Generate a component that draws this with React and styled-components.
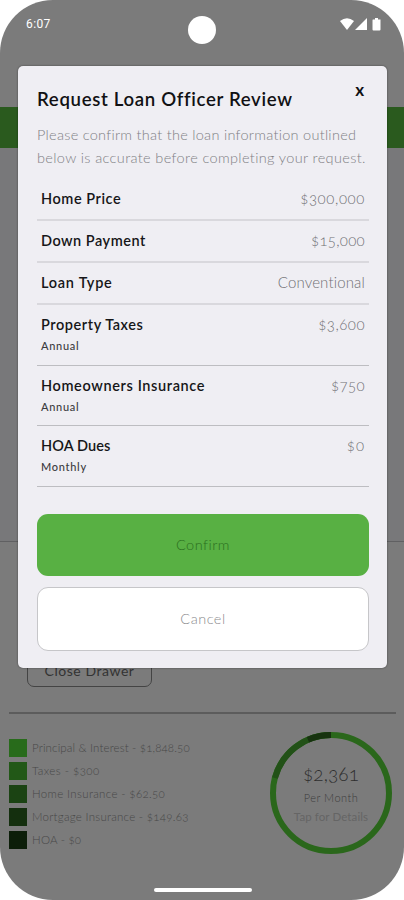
import React from "react";
import styled, { createGlobalStyle } from "styled-components";

const GlobalStyle = createGlobalStyle`
  * {
    box-sizing: border-box;
  }
  body {
    margin: 0;
    background: #ffffff;
    font-family: Lato, "Liberation Sans", sans-serif;
    font-variant-numeric: oldstyle-nums;
  }
`;

const Phone = styled.div`
  position: relative;
  width: 404px;
  height: 900px;
  overflow: hidden;
  border-radius: 53px;
  background: #7b7b7b;
  display: flex;
  flex-direction: column;
`;

const StatusBar = styled.div`
  height: 107px;
  padding: 15px 22px 0 26px;
  display: grid;
  grid-template-columns: 1fr 28px 1fr;
  align-items: start;
  color: #ffffff;
`;

const Clock = styled.span`
  margin-top: 2px;
  font-family: Roboto, sans-serif;
  font-size: 12px;
  line-height: 15px;
  font-weight: 400;
  letter-spacing: 0.4px;
  font-variant-numeric: normal;
`;

const Camera = styled.div`
  width: 28px;
  height: 28px;
  margin-left: -2px;
  margin-top: 1px;
  border-radius: 50%;
  background: #ffffff;
`;

const StatusIcons = styled.svg`
  justify-self: end;
  margin: 2px 0 0 0;
`;

const HeaderBand = styled.div`
  height: 41px;
  background: #2a5a1e;
`;

const LoanArea = styled.div`
  height: 394px;
  background: #78787a;
  border-bottom: 1px solid #606062;
`;

const DrawerButton = styled.div`
  width: 125px;
  height: 36px;
  margin: 109px 0 0 27px;
  border: 1px solid #444444;
  border-radius: 7px;
  color: #333333;
  font-size: 14px;
  line-height: 37px;
  text-align: center;
  letter-spacing: 0.55px;
`;

const Divider = styled.div`
  height: 2px;
  margin: 25px 8px 0 9px;
  background: #5c5c5c;
`;

const Breakdown = styled.div`
  display: flex;
  justify-content: space-between;
  padding: 17px 12px 0 9px;
`;

const Legend = styled.div`
  padding-top: 8px;
  display: flex;
  flex-direction: column;
  gap: 5px;
`;

const LegendItem = styled.div`
  display: flex;
  align-items: center;
  height: 18px;
  gap: 5px;
  color: #484848;
  font-size: 11.5px;
  line-height: 16px;
  font-weight: 300;
  letter-spacing: ${(props) => props.$spacing || 0}px;
  white-space: nowrap;
`;

const Swatch = styled.span`
  width: 18px;
  height: 18px;
  background: ${(props) => props.$color};
`;

const Payment = styled.div`
  display: grid;
  width: 122px;
  height: 124px;

  & > * {
    grid-area: 1 / 1;
  }
`;

const PaymentText = styled.div`
  display: flex;
  flex-direction: column;
  align-items: center;
  padding-top: 31px;
`;

const Total = styled.span`
  color: #2e2e2e;
  font-size: 19px;
  line-height: 24px;
  font-weight: 300;
  letter-spacing: 0.1px;
`;

const PerMonth = styled.span`
  margin-top: 3px;
  color: #3c3c3c;
  font-size: 11px;
  line-height: 18px;
  font-weight: 300;
  letter-spacing: 0.5px;
`;

const TapHint = styled.span`
  color: #656565;
  font-size: 11.5px;
  line-height: 19px;
  letter-spacing: 0.1px;
`;

const HomeBar = styled.div`
  position: absolute;
  left: 154px;
  bottom: 8px;
  width: 98px;
  height: 4px;
  border-radius: 2px;
  background: #ffffff;
`;

const Modal = styled.div`
  position: absolute;
  top: 66px;
  left: 18px;
  width: 369px;
  height: 602px;
  padding: 20px 18px 0 19px;
  border-radius: 5px;
  background: #efeef3;
  box-shadow: 0 0 2px rgba(0, 0, 0, 0.5);
`;

const ModalHeader = styled.div`
  display: flex;
  justify-content: space-between;
`;

const Title = styled.h1`
  margin: 0;
  color: #111113;
  font-size: 18.6px;
  line-height: 27px;
  height: 26px;
  font-weight: 600;
  letter-spacing: 0.67px;
  white-space: nowrap;
`;

const CloseButton = styled.span`
  margin-right: 5px;
  margin-top: -5px;
  height: 20px;
  color: #111113;
  font-size: 17px;
  line-height: 18px;
  font-weight: 700;
`;

const Message = styled.p`
  margin: 11px 0 0;
  color: #808084;
  font-size: 14.5px;
  line-height: 23px;
  font-weight: 300;
  white-space: nowrap;
`;

const MessageLine = styled.span`
  display: block;
  letter-spacing: ${(props) => props.$spacing}px;
`;

const Rows = styled.div`
  margin-top: 10px;
`;

const Row = styled.div`
  display: flex;
  justify-content: space-between;
  height: ${(props) => (props.$tall ? 60.7 : 42)}px;
  padding: 9px 4px 0;
  border-bottom: ${(props) => (props.$tall ? "1px solid #bdbdc1" : "2px solid #d9d8dd")};
`;

const Label = styled.div`
  color: #161618;
  font-size: 14.5px;
  line-height: 21px;
  font-weight: 600;
  letter-spacing: ${(props) => props.$spacing}px;
`;

const Period = styled.div`
  color: #3c3c3f;
  font-size: 11px;
  line-height: 21px;
  font-weight: 500;
  letter-spacing: 0.7px;
`;

const Value = styled.div`
  color: #707074;
  font-size: 15px;
  line-height: 21px;
  font-weight: 300;
  letter-spacing: ${(props) => props.$spacing}px;
`;

const Button = styled.button`
  display: block;
  width: 100%;
  height: ${(props) => (props.$primary ? 62 : 64)}px;
  margin: ${(props) => (props.$primary ? "27px 0 0" : "11px 0 0")};
  padding: 0 0 2px;
  border: ${(props) => (props.$primary ? "none" : "1px solid #c6c6c9")};
  border-radius: 11px;
  background: ${(props) => (props.$primary ? "#58b043" : "#ffffff")};
  color: ${(props) => (props.$primary ? "#2b6f20" : "#8c8c8e")};
  font-family: inherit;
  font-size: 14.5px;
  font-weight: 300;
  letter-spacing: 0.5px;
`;

const rows = [
  { label: "Home Price", value: "$300,000", ls: 0.55, vs: 0.6 },
  { label: "Down Payment", value: "$15,000", ls: 0.5, vs: 0.3 },
  { label: "Loan Type", value: "Conventional", ls: 0.75, vs: 0.15 },
  { label: "Property Taxes", value: "$3,600", period: "Annual", ls: 0.57, vs: 0.5 },
  { label: "Homeowners Insurance", value: "$750", period: "Annual", ls: 0.63, vs: 0.4 },
  { label: "HOA Dues", value: "$0", period: "Monthly", ls: 0.1, vs: 1 },
];

const legend = [
  { text: "Principal & Interest - $1,848.50", color: "#286b1b", spacing: 0.15 },
  { text: "Taxes - $300", color: "#225817", spacing: 0.45 },
  { text: "Home Insurance - $62.50", color: "#1b4313", spacing: 0.35 },
  { text: "Mortgage Insurance - $149.63", color: "#142f0e", spacing: 0.27 },
  { text: "HOA - $0", color: "#0c1e09", spacing: 0.2 },
];

function App() {
  return (
    <>
      <GlobalStyle />
      <Phone>
        <StatusBar>
          <Clock>6:07</Clock>
          <Camera />
          <StatusIcons width="42" height="14" viewBox="0 0 42 14" fill="#ffffff">
            <path d="M0 4Q7-1.5 14 4L7 13Z" />
            <path d="M27 1V13H15Z" />
            <path d="M33 2.5h2V1h3v1.5h2.5v10q0 1-1 1h-6q-1 0-1-1V3.5q0-1 .5-1Z" />
          </StatusIcons>
        </StatusBar>
        <HeaderBand />
        <LoanArea />
        <DrawerButton>Close Drawer</DrawerButton>
        <Divider />
        <Breakdown>
          <Legend>
            {legend.map((item) => (
              <LegendItem key={item.text} $spacing={item.spacing}>
                <Swatch $color={item.color} />
                {item.text}
              </LegendItem>
            ))}
          </Legend>
          <Payment>
            <svg width="122" height="124" viewBox="0 0 122 124" fill="none" strokeWidth="6">
              <circle cx="61" cy="62" r="58" stroke="#2a671b" />
              <path d="M5 47A58 58 0 0 1 61 4" stroke="#225117" />
              <path d="M38 8.7A58 58 0 0 1 61 4" stroke="#17330f" />
            </svg>
            <PaymentText>
              <Total>$2,361</Total>
              <PerMonth>Per Month</PerMonth>
              <TapHint>Tap for Details</TapHint>
            </PaymentText>
          </Payment>
        </Breakdown>
        <HomeBar />
        <Modal>
          <ModalHeader>
            <Title>Request Loan Officer Review</Title>
            <CloseButton>x</CloseButton>
          </ModalHeader>
          <Message>
            <MessageLine $spacing={0.28}>Please confirm that the loan information outlined</MessageLine>
            <MessageLine $spacing={0.37}>below is accurate before completing your request.</MessageLine>
          </Message>
          <Rows>
            {rows.map((row) => (
              <Row key={row.label} $tall={Boolean(row.period)}>
                <div>
                  <Label $spacing={row.ls}>{row.label}</Label>
                  {row.period && <Period>{row.period}</Period>}
                </div>
                <Value $spacing={row.vs}>{row.value}</Value>
              </Row>
            ))}
          </Rows>
          <Button $primary>Confirm</Button>
          <Button>Cancel</Button>
        </Modal>
      </Phone>
    </>
  );
}

export default App;
